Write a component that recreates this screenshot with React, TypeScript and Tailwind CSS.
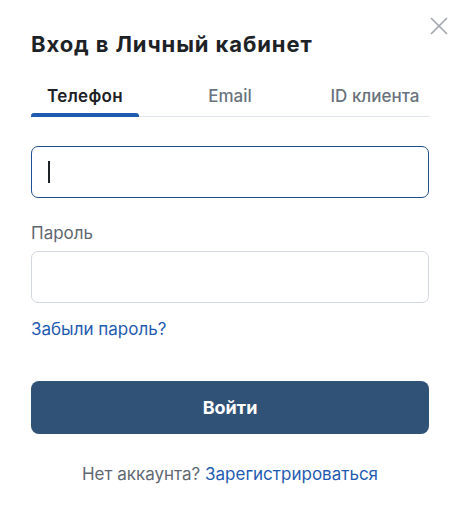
import { X } from "lucide-react";

const App = () => {
  return (
    <div
      className="relative min-h-[517px] w-[462px] bg-white"
      style={{ fontFamily: "Inter, 'Noto Sans', sans-serif" }}
    >
      <button className="absolute right-[8px] top-[11px] text-[#a3a8ae]">
        <X className="h-[30px] w-[30px]" strokeWidth={1.4} />
      </button>

      <div className="pl-[31px] pr-[33px] pt-[29px]">
        <h1 className="text-[22px] font-bold leading-[30px] tracking-[0.9px] text-[#1d2226]">
          Вход в Личный кабинет
        </h1>

        {/* Tabs */}
        <div className="mt-[26px] flex border-b border-[#dfe3ea]">
          <div className="relative w-[108px] pb-[9px] text-center text-[17px] font-semibold leading-[22px] tracking-[0.3px] text-[#1d2226]">
            Телефон
            <span className="absolute -bottom-[1px] left-0 right-0 h-[4px] rounded-t-[3px] bg-[#1f5bb0]" />
          </div>
          <div className="w-[182px] pb-[9px] text-center text-[17px] font-medium leading-[22px] text-[#69727d]">
            Email
          </div>
          <div className="w-[108px] pb-[9px] text-center text-[17px] font-medium leading-[22px] text-[#69727d]">
            ID клиента
          </div>
        </div>

        {/* Phone input */}
        <div className="mt-[29px] flex h-[52px] items-center rounded-[7px] border border-[#1f4f8c] px-[16px]">
          <span className="h-[22px] w-[1.5px] bg-[#1d2226]" />
        </div>

        <div className="mt-[24px] text-[17px] leading-[22px] text-[#5f6872]">Пароль</div>
        <div className="mt-[7px] h-[52px] rounded-[7px] border border-[#d2d6e0]" />

        <a className="mt-[15px] block text-[17px] leading-[22px] text-[#1f5bb0]">Забыли пароль?</a>

        <button className="mt-[41px] flex h-[53px] w-full items-center justify-center rounded-[8px] bg-[#305276] text-[18px] font-bold text-white">
          Войти
        </button>

        <p className="mt-[29px] text-center text-[17px] leading-[22px] text-[#5f6872]">
          Нет аккаунта? <a className="text-[#1f5bb0]">Зарегистрироваться</a>
        </p>
      </div>
    </div>
  );
};

export default App;
